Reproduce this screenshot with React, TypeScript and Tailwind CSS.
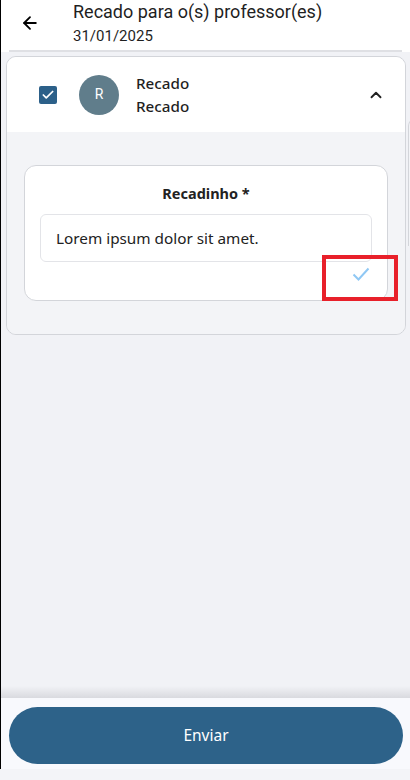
import { ArrowLeft, ChevronUp, Check } from 'lucide-react'

const App = () => {
  return (
    <div className="w-[410px] h-[780px] bg-[#f3f4f8] flex flex-col overflow-hidden font-['Roboto',sans-serif]">
      <div className="h-[769px] border-l border-black flex flex-col">
        {/* Header */}
        <div className="h-[50px] bg-white flex items-start shrink-0">
          <div className="w-[72px] h-[46px] flex items-center pl-[19px]">
            <ArrowLeft className="w-[20px] h-[20px] text-black" strokeWidth={2.2} />
          </div>
          <div className="pt-[1px]">
            <p className="text-[18px] leading-[22px] text-[#1f1f1f]">Recado para o(s) professor(es)</p>
            <p className="text-[15px] leading-[26px] text-[#1f1f1f]">31/01/2025</p>
          </div>
        </div>
        <div className="h-[2px] bg-white shrink-0">
          <div className="mx-[8px] h-[2px] bg-[#dfe0e4]" />
        </div>

        {/* Content */}
        <div className="flex-1 bg-[#f1f2f6] pt-[4px] pl-[5px] flex items-start gap-[2px] overflow-hidden font-['Noto_Sans',sans-serif]">
          <div className="w-[400px] shrink-0 rounded-[10px] border border-[#d3d5da] overflow-hidden">
            <div className="h-[75px] bg-white flex items-center pl-[32px] pr-[20px]">
              <div className="w-[18px] h-[18px] rounded-[2px] bg-[#2c6089] flex items-center justify-center">
                <Check className="w-[14px] h-[14px] text-white" strokeWidth={3} />
              </div>
              <div className="ml-[22px] w-[40px] h-[40px] rounded-full bg-[#607d8b] flex items-center justify-center text-white text-[14px] font-['Roboto',sans-serif]">
                R
              </div>
              <div className="ml-[17px] flex-1 text-[15.2px] leading-[23px] text-[#1f1f1f] font-medium">
                <p>Recado</p>
                <p>Recado</p>
              </div>
              <ChevronUp className="w-[18px] h-[18px] text-[#222]" strokeWidth={2.5} />
            </div>
            <div className="bg-[#f3f4f7] h-[202px] pt-[33px] px-[17px]">
              <div className="relative h-[136px] bg-white rounded-[12px] border border-[#d3d5da] px-[15px] pt-[16px]">
                <p className="text-center text-[14.5px] font-bold text-[#222] leading-[22px]">Recadinho *</p>
                <div className="mt-[10px] h-[48px] rounded-[6px] border border-[#e3e4e8] flex items-center px-[15px]">
                  <span className="text-[15.3px] text-[#222]">Lorem ipsum dolor sit amet.</span>
                </div>
                <div className="flex justify-end pr-[2px] pt-[5px]">
                  <svg width="18" height="14" viewBox="0 0 18 14" fill="none">
                    <path d="M1.5 7.5 L6.5 12.5 L16.5 1.5" stroke="#90c8f4" strokeWidth="2" />
                  </svg>
                </div>
                <div className="absolute left-[297px] top-[89px] w-[76px] h-[46px] border-[4px] border-[#e8202a]" />
              </div>
            </div>
          </div>
          <div className="mt-[62px] w-[20px] h-[128px] shrink-0 rounded-tl-[8px] border-l border-t border-[#d3d5da] bg-[#f3f4f7]" />
        </div>

        {/* Footer */}
        <div className="h-[12px] shrink-0 bg-gradient-to-b from-[#f1f2f6] to-[#d9dadf]" />
        <div className="h-[71px] shrink-0 bg-[#f8f9fd] px-[8px] pt-[9px]">
          <button className="w-[394px] h-[57px] rounded-full bg-[#2d6289] text-white text-[15.5px] font-['Noto_Sans',sans-serif]">
            Enviar
          </button>
        </div>
      </div>
    </div>
  )
}

export default App
